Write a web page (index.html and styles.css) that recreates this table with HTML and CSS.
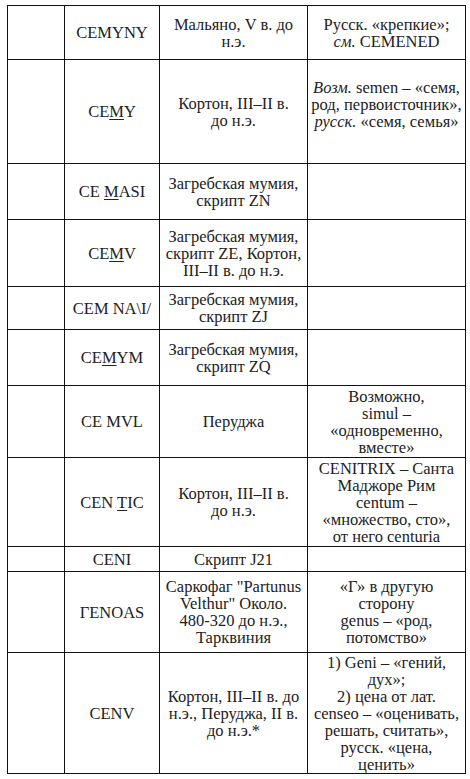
FILE: index.html
```html
<!DOCTYPE html>
<html lang="ru">
<head>
<meta charset="utf-8">
<link rel="stylesheet" href="styles.css">
</head>
<body>
<table class="grid">
  <colgroup>
    <col class="c1"><col class="c2"><col class="c3"><col class="c4">
  </colgroup>
  <tbody>
    <tr class="r1">
      <td></td>
      <td>CEMYNY</td>
      <td>Мальяно, V в. до<br>н.э.</td>
      <td>Русск. «крепкие»;<br><i>см.</i> CEMENED</td>
    </tr>
    <tr class="r2">
      <td></td>
      <td>CE<u>M</u>Y</td>
      <td>Кортон, III–II в.<br>до н.э.</td>
      <td class="up"><i>Возм.</i> semen – «семя,<br>род, первоисточник»,<br><i>русск.</i> «семя, семья»</td>
    </tr>
    <tr class="r3">
      <td></td>
      <td>CE <u>M</u>ASI</td>
      <td>Загребская мумия,<br>скрипт ZN</td>
      <td></td>
    </tr>
    <tr class="r4">
      <td></td>
      <td>CE<u>M</u>V</td>
      <td>Загребская мумия,<br>скрипт ZE, Кортон,<br>III–II в. до н.э.</td>
      <td></td>
    </tr>
    <tr class="r5">
      <td></td>
      <td>CEM NA\I/</td>
      <td>Загребская мумия,<br>скрипт ZJ</td>
      <td></td>
    </tr>
    <tr class="r6">
      <td></td>
      <td>CE<u>M</u>YM</td>
      <td>Загребская мумия,<br>скрипт ZQ</td>
      <td></td>
    </tr>
    <tr class="r7">
      <td></td>
      <td>CE MVL</td>
      <td>Перуджа</td>
      <td>Возможно,<br>simul –<br>«одновременно,<br>вместе»</td>
    </tr>
    <tr class="r8">
      <td></td>
      <td>CEN <u>T</u>IC</td>
      <td>Кортон, III–II в.<br>до н.э.</td>
      <td>CENITRIX – Санта<br>Маджоре Рим<br>centum –<br>«множество, сто»,<br>от него centuria</td>
    </tr>
    <tr class="r9">
      <td></td>
      <td>CENI</td>
      <td>Скрипт J21</td>
      <td></td>
    </tr>
    <tr class="r10">
      <td></td>
      <td>ГЕNOAS</td>
      <td>Саркофаг "Partunus<br>Velthur" Около.<br>480-320 до н.э.,<br>Тарквиния</td>
      <td>«Г» в другую<br>сторону<br>genus – «род,<br>потомство»</td>
    </tr>
    <tr class="r11">
      <td></td>
      <td>CENV</td>
      <td>Кортон, III–II в. до<br>н.э., Перуджа, II в.<br>до н.э.*</td>
      <td>1) Geni – «гений,<br>дух»;<br>2) цена от лат.<br>censeo – «оценивать,<br>решать, считать»,<br>русск. «цена,<br>ценить»</td>
    </tr>
  </tbody>
</table>
</body>
</html>
```

FILE: styles.css
```css
html, body {
  margin: 0;
  padding: 0;
  background: #ffffff;
}

body {
  padding: 5px 0 0 7px;
}

.grid {
  border-collapse: collapse;
  table-layout: fixed;
  width: 458px;
  font-family: "Liberation Serif", "DejaVu Serif", serif;
  font-size: 16.5px;
  line-height: 17px;
  color: #222222;
}

.c1 { width: 57px; }
.c2 { width: 95px; }
.c3 { width: 148px; }
.c4 { width: 158px; }

.grid td {
  border: 1px solid #111111;
  padding: 0 2px;
  text-align: center;
  vertical-align: middle;
  white-space: nowrap;
  overflow: hidden;
  font-family: "Liberation Serif", "DejaVu Serif", serif;
}

.grid td.up {
  padding-bottom: 14px;
}

.grid u {
  text-underline-offset: 2px;
}

.r1 { height: 54px; }
.r2 { height: 104px; }
.r3 { height: 56px; }
.r4 { height: 67px; }
.r5 { height: 43px; }
.r6 { height: 56px; }
.r7 { height: 72px; }
.r8 { height: 89px; }
.r9 { height: 25px; }
.r10 { height: 81px; }
.r11 { height: 121px; }
```
